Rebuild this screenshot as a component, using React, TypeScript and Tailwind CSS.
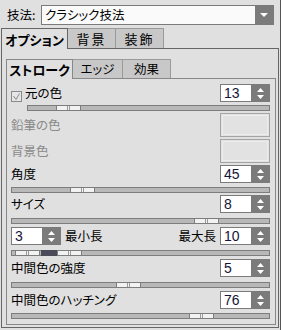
import React from "react";

const font = { fontFamily: '"Noto Sans CJK JP", "Noto Sans", sans-serif' };

function SpinButton() {
  return (
    <div className="w-[18px] h-full bg-[#7b7b7b] flex flex-col items-center justify-center gap-[3px]">
      <svg width="7" height="4" viewBox="0 0 7 4">
        <polygon points="0,4 7,4 3.5,0" fill="#fff" />
      </svg>
      <svg width="7" height="4" viewBox="0 0 7 4">
        <polygon points="0,0 7,0 3.5,4" fill="#fff" />
      </svg>
    </div>
  );
}

function Spin({ value }: { value: string }) {
  return (
    <div className="w-[50px] h-[18px] flex border border-[#7b7b7b] bg-white shrink-0">
      <div className="flex-1 flex items-center pl-[3px] text-[14px] text-[#141438] leading-none" style={{ fontFamily: '"Liberation Sans", sans-serif' }}>
        {value}
      </div>
      <SpinButton />
    </div>
  );
}

function Thumb({ left }: { left: number }) {
  return (
    <div
      className="absolute top-[-1px] h-[6px] w-[25px] bg-[#f2f2f2] border border-[#7d7d7d] flex justify-center gap-[1px]"
      style={{ left }}
    >
      <div className="w-px h-full bg-[#9a9a9a]" />
      <div className="w-px h-full bg-[#9a9a9a]" />
    </div>
  );
}

function Slider({ left, className = "" }: { left: number; className?: string }) {
  return (
    <div className={`relative h-[6px] bg-[#b8b8b8] border border-[#7d7d7d] ${className}`}>
      <Thumb left={left} />
    </div>
  );
}

function Row({ label, value, className = "" }: { label: string; value: string; className?: string }) {
  return (
    <div className={`flex items-center justify-between ${className}`}>
      <span className="text-[12.5px] leading-none text-black">{label}</span>
      <Spin value={value} />
    </div>
  );
}

function Swatch({ label, className = "" }: { label: string; className?: string }) {
  return (
    <div className={`flex items-center justify-between ${className}`}>
      <span className="text-[12.5px] leading-none text-[#8a8a8a]">{label}</span>
      <div className="w-[50px] h-[24px] border border-[#a4a4a4] bg-[#e2e2e2] p-px">
        <div className="w-full h-full border border-[#ececec]" />
      </div>
    </div>
  );
}

export default function App() {
  return (
    <div className="w-[281px] h-[330px] bg-[#e0e0e0] overflow-hidden border-r border-[#555] [font-feature-settings:'palt'] whitespace-nowrap" style={font}>
      {/* technique */}
      <div className="flex items-center pt-[5px] pl-[7px]">
        <span className="w-[34px] text-[12.5px] leading-none text-black">技法:</span>
        <div className="w-[233px] h-[20px] border border-[#7b7b7b] bg-white flex">
          <div className="flex-1 flex items-center pl-[3px] text-[12.5px] leading-none bg-[#fafafa]">クラシック技法</div>
          <div className="w-[18px] h-full bg-[#7b7b7b] flex items-center justify-center">
            <svg width="8" height="4" viewBox="0 0 8 4">
              <polygon points="0,0 8,0 4,4" fill="#fff" />
            </svg>
          </div>
        </div>
      </div>

      {/* outer tabs */}
      <div className="flex items-end pl-[1px] mt-[2px] h-[21px]">
        <div className="relative z-10 w-[67px] h-[21px] -mb-px bg-[#e0e0e0] border border-b-0 border-[#666] flex items-center justify-center text-[13px] font-bold leading-none">
          オプション
        </div>
        <div className="w-[48px] h-[20px] bg-[#c8c8c8] border border-b-0 border-l-0 border-[#9a9a9a] flex items-center justify-center text-[13px] leading-none tracking-[2px]">
          背景
        </div>
        <div className="w-[48px] h-[20px] bg-[#c8c8c8] border border-b-0 border-l-0 border-[#9a9a9a] flex items-center justify-center text-[13px] leading-none tracking-[2px]">
          装飾
        </div>
      </div>

      <div className="ml-[1px] w-[278px] h-[280px] border border-[#666] pt-[9px] pl-[4px]">
        {/* inner tabs */}
        <div className="flex items-end h-[20px]">
          <div className="relative z-10 w-[67px] h-[20px] -mb-px bg-[#e0e0e0] border border-b-0 border-[#888] flex items-center justify-center text-[13px] font-bold leading-none">
            ストローク
          </div>
          <div className="w-[50px] h-[19px] bg-[#c8c8c8] border border-b-0 border-l-0 border-[#9a9a9a] flex items-center justify-center text-[12.5px] leading-none">
            エッジ
          </div>
          <div className="w-[48px] h-[19px] bg-[#c8c8c8] border border-b-0 border-l-0 border-[#9a9a9a] flex items-center justify-center text-[12.5px] leading-none">
            効果
          </div>
        </div>

        <div className="w-[270px] h-[247px] border border-[#888] pl-[4px] pr-[5px] pt-[5px] flex flex-col">
          <div className="flex items-center justify-between">
            <div className="flex items-center gap-[3px] pt-[6px]">
              <div className="w-[11px] h-[11px] border border-[#8a8a8a] bg-[#e6e6e6] flex items-center justify-center">
                <svg width="9" height="9" viewBox="0 0 9 9">
                  <polyline points="1.5,4 4,7.5 7.5,1.5" fill="none" stroke="#8a8a8a" strokeWidth="1" />
                </svg>
              </div>
              <span className="text-[12.5px] leading-none -mt-[6px]">元の色</span>
            </div>
            <Spin value="13" />
          </div>
          <Slider left={28} className="mt-[3px] ml-[16px]" />

          <Swatch label="鉛筆の色" className="mt-[2px]" />
          <Swatch label="背景色" className="mt-[2px]" />

          <Row label="角度" value="45" className="mt-[2px]" />
          <Slider left={58} className="mt-[4px]" />

          <Row label="サイズ" value="8" className="mt-[2px]" />
          <Slider left={182} className="mt-[5px]" />

          <div className="flex items-center mt-[3px]">
            <Spin value="3" />
            <span className="ml-[4px] text-[12.5px] leading-none">最小長</span>
            <span className="ml-auto mr-[4px] text-[12.5px] leading-none">最大長</span>
            <Spin value="10" />
          </div>
          <div className="relative h-[6px] bg-[#b8b8b8] border border-[#7d7d7d] mt-[5px]">
            <div className="absolute top-[-1px] left-[29px] w-[17px] h-[6px] bg-[#4a4a58]" />
            <Thumb left={3} />
            <Thumb left={45} />
          </div>

          <Row label="中間色の強度" value="5" className="mt-[3px]" />
          <Slider left={104} className="mt-[5px]" />

          <Row label="中間色のハッチング" value="76" className="mt-[3px]" />
          <Slider left={177} className="mt-[4px]" />
        </div>
      </div>
    </div>
  );
}
